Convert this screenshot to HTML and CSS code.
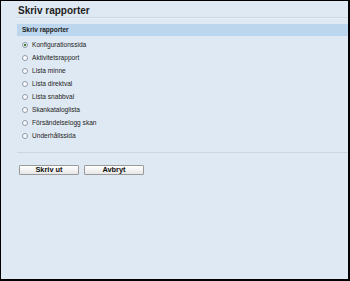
FILE: index.html
```html
<!DOCTYPE html>
<html lang="sv">
<head>
  <meta charset="UTF-8" />
  <title>Skriv rapporter</title>
  <link rel="stylesheet" href="styles.css">
</head>
<body>
  <div class="page">
    <h1 class="title">Skriv rapporter</h1>

    <!-- RAPPORTER -->
    <div class="section-head">Skriv rapporter</div>
    <form id="report-form" class="report-list">
      <label class="row"><input type="radio" name="rep" checked /><span>Konfigurationssida</span></label>
      <label class="row"><input type="radio" name="rep" /><span>Aktivitetsrapport</span></label>
      <label class="row"><input type="radio" name="rep" /><span>Lista minne</span></label>
      <label class="row"><input type="radio" name="rep" /><span>Lista direktval</span></label>
      <label class="row"><input type="radio" name="rep" /><span>Lista snabbval</span></label>
      <label class="row"><input type="radio" name="rep" /><span>Skankataloglista</span></label>
      <label class="row"><input type="radio" name="rep" /><span>Försändelselogg skan</span></label>
      <label class="row"><input type="radio" name="rep" /><span>Underhållssida</span></label>
    </form>

    <hr class="sep" />

    <!-- KNAPPAR -->
    <div class="actions">
      <button type="button" class="btn">Skriv ut</button>
      <button type="button" class="btn">Avbryt</button>
    </div>
  </div>
</body>
</html>
```

FILE: styles.css
```css
:root {
  --bg: #dfe9f3;
  --bar: #bcd6ee;
  --line: #c8d6e6;
  --ink: #1d1d1d;
}
* {
  box-sizing: border-box;
  margin: 0;
  padding: 0;
  font-family: "Liberation Sans", Arial, sans-serif;
}
html,
body {
  height: 281px;
}
body {
  background: var(--bg);
  border-style: solid;
  border-color: #000;
  border-width: 1px 2px 2px 1px;
  color: var(--ink);
  overflow: hidden;
}
.page {
  margin-left: 16px;
  padding-top: 4px;
}
.title {
  font-size: 10px;
  font-weight: 700;
  line-height: 12px;
  height: 13px;
  padding-left: 1px;
  border-bottom: 1px solid var(--line);
  box-shadow: 0 1px 0 #e8eff7;
}

/* SEZIONE */
.section-head {
  margin-top: 6px;
  height: 12px;
  line-height: 12px;
  background: var(--bar);
  font-size: 6.5px;
  font-weight: 700;
  padding-left: 5px;
}
.report-list {
  display: flex;
  flex-direction: column;
  padding-top: 2px;
}
.row {
  display: flex;
  align-items: center;
  height: 13px;
  font-size: 6.6px;
  padding-left: 5px;
  gap: 4px;
}
.row span {
  margin-top: -1px;
}
.row input {
  appearance: none;
  width: 6px;
  height: 6px;
  margin: 1px 0 0;
  border: 1px solid #8d9aa8;
  border-radius: 50%;
  background: #fbfcfd;
}
.row input:checked {
  background: radial-gradient(circle, #3f7d3a 0 1.3px, #fbfcfd 1.6px);
}

.sep {
  border: 0;
  border-top: 1px solid var(--line);
  margin-top: 10px;
}

/* PULSANTI */
.actions {
  display: flex;
  gap: 5px;
  margin-top: 12px;
  padding-left: 2px;
}
.btn {
  width: 60px;
  height: 10px;
  font-size: 7.4px;
  font-weight: 700;
  line-height: 8px;
  color: #111;
  border: 1px solid #9a9a9a;
  border-radius: 1px;
  background: linear-gradient(#ffffff, #e6e6e6);
  cursor: pointer;
}
```
